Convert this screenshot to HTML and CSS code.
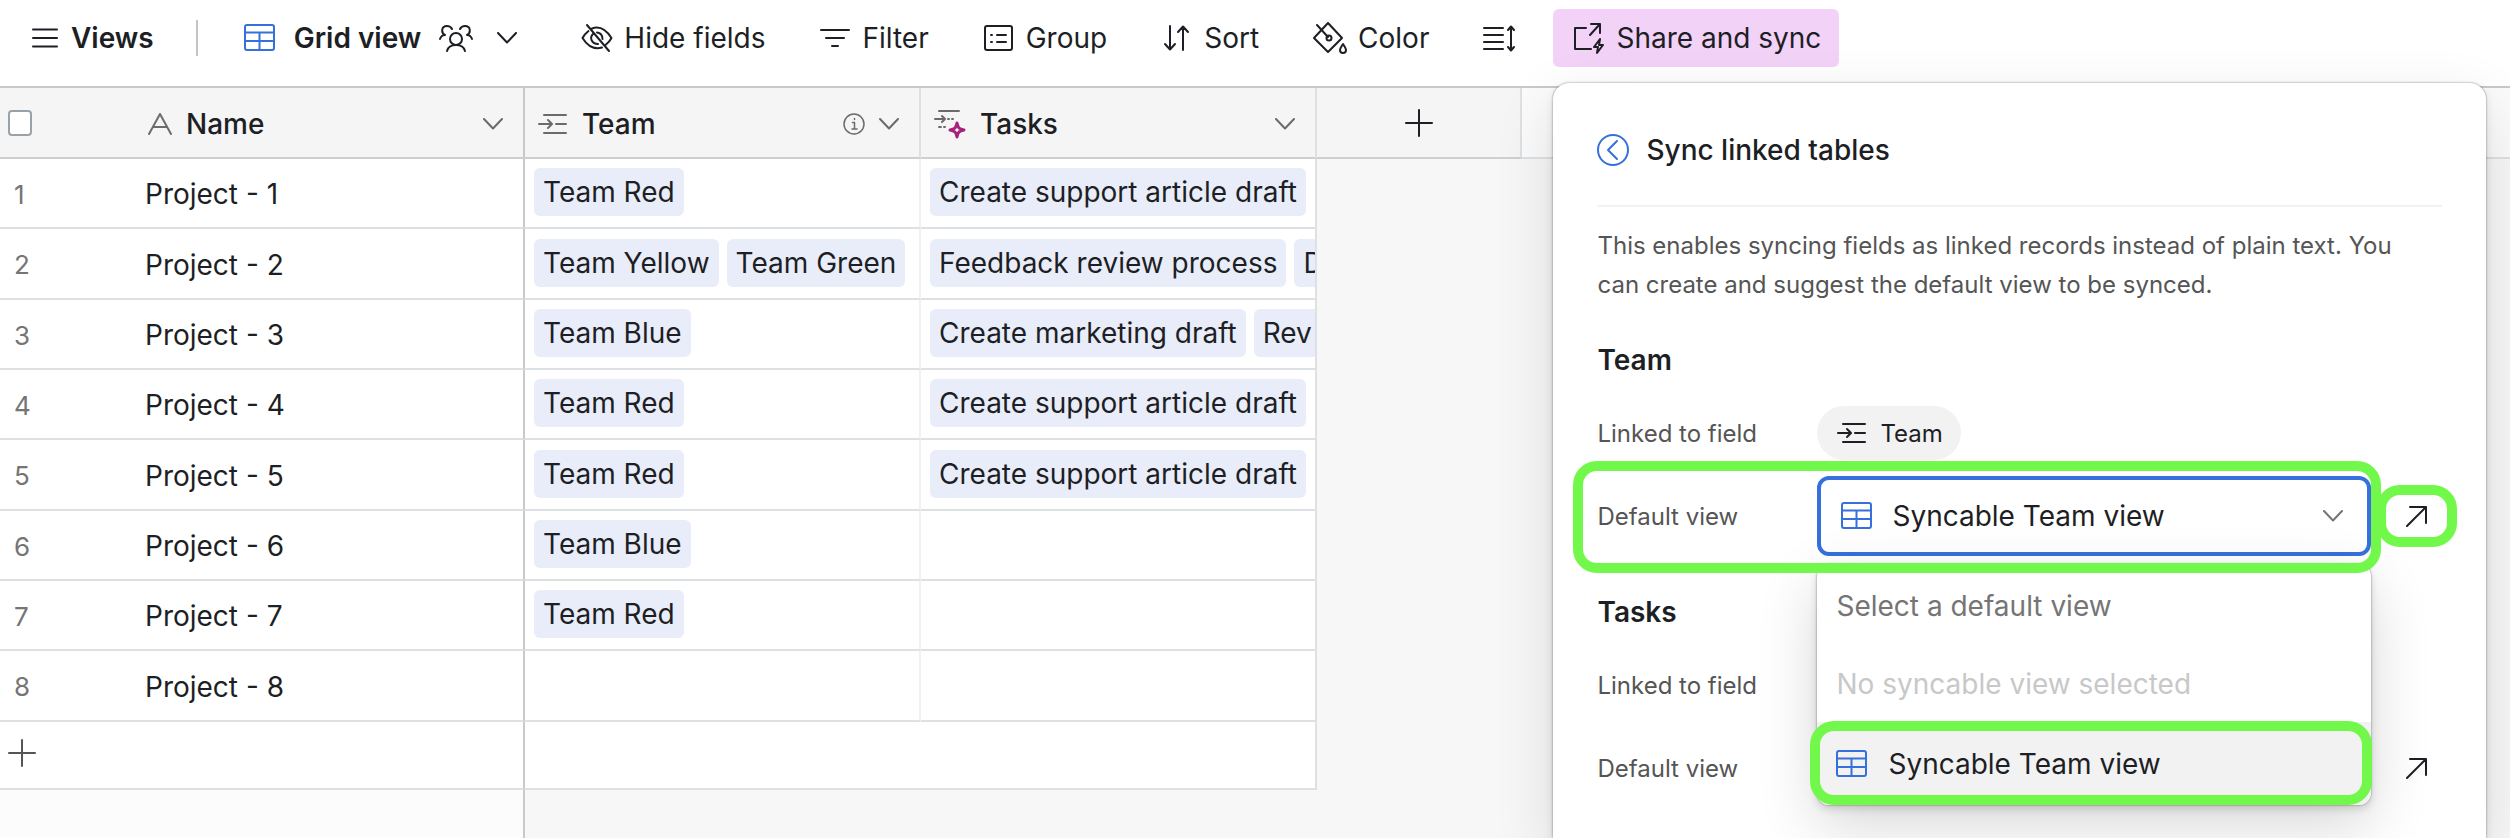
FILE: index.html
```html
<!DOCTYPE html>
<html lang="en">
<head>
  <meta charset="UTF-8" />
  <meta name="viewport" content="width=device-width, initial-scale=1" />
  <title>Grid view</title>
  <link rel="stylesheet" href="styles.css">
</head>
<body>
  <!-- Shared icons -->
  <svg class="sprite" aria-hidden="true">
    <symbol id="i-grid" viewBox="0 0 32 28">
      <rect x="1" y="1" width="29" height="25" rx="2" />
      <path d="M1 8.500h29M1 17h29M15.500 8.500V26" />
    </symbol>
    <symbol id="i-chevron" viewBox="0 0 20 12">
      <path d="M1 1l9 9.500L19 1" />
    </symbol>
    <symbol id="i-link" viewBox="0 0 30 22">
      <path d="M6 2h22M6 20h22M1 11h12M10 7l4 4-4 4M18 11h10" />
    </symbol>
    <symbol id="i-plus" viewBox="0 0 28 28">
      <path d="M14 1v26M1 14h26" />
    </symbol>
    <symbol id="i-open" viewBox="0 0 22 22">
      <path d="M1 21L20 2M4 2h16v16" />
    </symbol>
  </svg>

  <!-- Toolbar -->
  <header class="toolbar">
    <button class="tool views">
      <svg class="icon-views" viewBox="0 0 26 20"><path d="M1 1.500h24M1 10h24M1 18.500h24" /></svg>
      Views
    </button>
    <span class="divider"></span>
    <button class="tool view-name">
      <svg class="icon-grid"><use href="#i-grid" /></svg>
      <span>Grid view</span>
      <svg class="icon-people" viewBox="0 0 34 28">
        <circle cx="17" cy="15" r="6" />
        <path d="M8 27c1-4 4-6 9-6s8 2 9 6M1 15c1-3 3-4 5-4C2 9 2 2 8 2c2 0 4 1 5 3M33 15c-1-3-3-4-5-4 4-2 4-9-2-9-2 0-4 1-5 3" />
      </svg>
      <svg class="icon-chevron"><use href="#i-chevron" /></svg>
    </button>
    <button class="tool">
      <svg class="icon" viewBox="0 0 32 32">
        <path d="M6 3l22 26M11 6.500c8-3 14 1 19.500 9.500-1.500 3-3.500 5-6 7M7.500 9C5 11 3 13 1.500 16c5 8 11 12 19.500 9.500M16 10.500c3.500.5 5.500 3 5.500 6.500M12 12c-4 4-1 10 5 10" />
      </svg>
      Hide fields
    </button>
    <button class="tool">
      <svg class="icon" viewBox="0 0 32 32"><path d="M2 8h28M7 16h18M13 24h6" /></svg>
      Filter
    </button>
    <button class="tool">
      <svg class="icon" viewBox="0 0 32 32">
        <rect x="2" y="4" width="27" height="24" rx="2" />
        <path d="M8 13h1M14 13h9M8 20h1M14 20h9" />
      </svg>
      Group
    </button>
    <button class="tool">
      <svg class="icon" viewBox="0 0 32 32"><path d="M9 4v23M4 22l5 5.500 5-5.500M22 28V5M17 10l5-5.500L27 10" /></svg>
      Sort
    </button>
    <button class="tool">
      <svg class="icon icon-color" viewBox="0 0 34 32">
        <path d="M15 1l14 15-14 14L1 16zM4 3l11 12" />
        <circle cx="16" cy="16" r="2.500" />
        <path d="M30 22c-2 3-3 4.500-3 6a3 3 0 0 0 6 0c0-1.500-1-3-3-6z" />
      </svg>
      Color
    </button>
    <button class="tool" aria-label="Row height">
      <svg class="icon" viewBox="0 0 32 32"><path d="M1 6h19M1 13h19M1 20h19M1 27h19M28 5v23M25 8l3-3.500L31 8M25 25l3 3.500 3-3.500" /></svg>
    </button>

    <div class="share">
      <button class="tool share-button">
        <svg class="icon" viewBox="0 0 32 32">
          <path d="M13 6H2v21h16M17 13L27 2M18 2h9v9M27 17l-6 8h4l-1 6 6-8h-4z" />
        </svg>
        Share and sync
      </button>

      <section class="panel">
        <div class="panel-head">
          <button class="back" aria-label="Back">
            <svg viewBox="0 0 32 32"><circle cx="16" cy="16" r="15" /><path d="M20 7l-9 9 9 9" /></svg>
          </button>
          <h2>Sync linked tables</h2>
        </div>
        <p class="note">This enables syncing fields as linked records instead of plain text. You can create and suggest the default view to be synced.</p>

        <h3>Team</h3>
        <div class="field">
          <span class="label">Linked to field</span>
          <span class="pill"><svg class="icon-link"><use href="#i-link" /></svg>Team</span>
        </div>
        <div class="field default">
          <label class="label" for="team-view">Default view</label>
          <div class="picker">
            <svg class="icon-grid"><use href="#i-grid" /></svg>
            <select id="team-view">
              <option>Syncable Team view</option>
            </select>
            <svg class="icon-chevron"><use href="#i-chevron" /></svg>
            <ul class="menu" role="listbox" aria-label="Select a default view">
              <li class="hint">Select a default view</li>
              <li class="empty">No syncable view selected</li>
              <li class="option" role="option" aria-selected="true">
                <svg class="icon-grid"><use href="#i-grid" /></svg>
                Syncable Team view
                <span class="ring ring-option"></span>
              </li>
            </ul>
          </div>
          <a class="open" href="#" aria-label="Open Team view">
            <svg><use href="#i-open" /></svg>
            <span class="ring ring-open"></span>
          </a>
          <span class="ring ring-field"></span>
        </div>

        <h3>Tasks</h3>
        <div class="field">
          <span class="label">Linked to field</span>
        </div>
        <div class="field default">
          <span class="label">Default view</span>
          <a class="open" href="#" aria-label="Open Tasks view">
            <svg><use href="#i-open" /></svg>
          </a>
        </div>
      </section>
    </div>
  </header>

  <!-- Records -->
  <table class="records">
    <colgroup>
      <col class="col-num"><col class="col-name"><col class="col-link"><col class="col-link"><col class="col-add"><col>
    </colgroup>
    <thead>
      <tr>
        <th><input type="checkbox" aria-label="Select all"></th>
        <th class="name">
          <div class="head">
            <svg class="icon-text" viewBox="0 0 24 22"><path d="M1 21L12 1l11 20M5 14h14" /></svg>
            <span>Name</span>
            <svg class="icon-chevron"><use href="#i-chevron" /></svg>
          </div>
        </th>
        <th class="team">
          <div class="head">
            <svg class="icon-link"><use href="#i-link" /></svg>
            <span>Team</span>
            <svg class="icon-info" viewBox="0 0 22 22"><circle cx="11" cy="11" r="10" /><path d="M9.500 9.500h2V16M9 16h5M11.500 5.500v1" /></svg>
            <svg class="icon-chevron"><use href="#i-chevron" /></svg>
          </div>
        </th>
        <th class="tasks">
          <div class="head">
            <svg class="icon-ai" viewBox="0 0 32 30">
              <path d="M5 2h20M1 10h9M8 7l3 3-3 3M14 10h1M18 10h1M5 18h2M10 18h1" />
              <path class="spark" d="M23 14c1 5 2 6 7 7-5 1-6 2-7 7-1-5-2-6-7-7 5-1 6-2 7-7z" />
            </svg>
            <span>Tasks</span>
            <svg class="icon-chevron"><use href="#i-chevron" /></svg>
          </div>
        </th>
        <th class="add"><button aria-label="Add field"><svg class="icon-plus"><use href="#i-plus" /></svg></button></th>
        <th class="rest"></th>
      </tr>
    </thead>
    <tbody>
      <tr>
        <td class="num">1</td><td class="name">Project - 1</td>
        <td class="team"><div class="chips"><span>Team Red</span></div></td>
        <td class="tasks"><div class="chips"><span>Create support article draft</span></div></td>
      </tr>
      <tr>
        <td class="num">2</td><td class="name">Project - 2</td>
        <td class="team"><div class="chips"><span>Team Yellow</span><span>Team Green</span></div></td>
        <td class="tasks"><div class="chips"><span>Feedback review process</span><span>D</span></div></td>
      </tr>
      <tr>
        <td class="num">3</td><td class="name">Project - 3</td>
        <td class="team"><div class="chips"><span>Team Blue</span></div></td>
        <td class="tasks"><div class="chips"><span>Create marketing draft</span><span>Rev</span></div></td>
      </tr>
      <tr>
        <td class="num">4</td><td class="name">Project - 4</td>
        <td class="team"><div class="chips"><span>Team Red</span></div></td>
        <td class="tasks"><div class="chips"><span>Create support article draft</span></div></td>
      </tr>
      <tr>
        <td class="num">5</td><td class="name">Project - 5</td>
        <td class="team"><div class="chips"><span>Team Red</span></div></td>
        <td class="tasks"><div class="chips"><span>Create support article draft</span></div></td>
      </tr>
      <tr>
        <td class="num">6</td><td class="name">Project - 6</td>
        <td class="team"><div class="chips"><span>Team Blue</span></div></td>
        <td class="tasks"></td>
      </tr>
      <tr>
        <td class="num">7</td><td class="name">Project - 7</td>
        <td class="team"><div class="chips"><span>Team Red</span></div></td>
        <td class="tasks"></td>
      </tr>
      <tr>
        <td class="num">8</td><td class="name">Project - 8</td>
        <td class="team"></td>
        <td class="tasks"></td>
      </tr>
    </tbody>
    <tfoot>
      <tr>
        <td class="num"><button aria-label="Add record"><svg class="icon-plus"><use href="#i-plus" /></svg></button></td>
        <td class="name"></td>
        <td class="tasks" colspan="2"></td>
      </tr>
    </tfoot>
  </table>
  <div class="frozen-rest"></div>
</body>
</html>
```
FILE: styles.css
```css
* {
  box-sizing: border-box;
}

body {
  margin: 0;
  height: 100vh;
  overflow: hidden;
  display: flex;
  flex-direction: column;
  background: #f7f7f7;
  color: #1d1f25;
  font-family: Inter, "Liberation Sans", sans-serif;
  font-size: 28px;
}

button {
  border: none;
  background: none;
  padding: 0;
  color: inherit;
  font: inherit;
  cursor: pointer;
}

svg {
  display: block;
  flex: none;
  fill: none;
  stroke: currentColor;
  stroke-width: 2;
  stroke-linecap: round;
  stroke-linejoin: round;
}

.sprite {
  position: absolute;
  width: 0;
  height: 0;
}

.icon {
  width: 32px;
  height: 32px;
}

.icon-color {
  width: 34px;
}

.icon-views {
  width: 26px;
  height: 20px;
}

.icon-grid {
  width: 32px;
  height: 28px;
  color: #3570dc;
}

.icon-people {
  width: 34px;
  height: 28px;
}

.icon-chevron {
  width: 20px;
  height: 12px;
}

.icon-link {
  width: 30px;
  height: 22px;
}

.icon-text {
  width: 24px;
  height: 22px;
}

.icon-info {
  width: 22px;
  height: 22px;
  stroke-width: 1.5;
}

.icon-ai {
  width: 32px;
  height: 30px;
}

.icon-ai .spark {
  stroke: #a8207f;
  stroke-width: 3;
}

.icon-plus {
  width: 28px;
  height: 28px;
}

/* Toolbar */
.toolbar {
  flex: none;
  height: 88px;
  display: flex;
  align-items: flex-start;
  padding: 9px 24px 0 32px;
  background: #fff;
  border-bottom: 2px solid #c9c9c9;
}

.tool {
  height: 58px;
  display: flex;
  align-items: center;
  gap: 11px;
  margin-right: 54px;
  white-space: nowrap;
}

.views {
  gap: 13px;
  margin-right: 42px;
  font-weight: 600;
}

.divider {
  width: 2px;
  height: 36px;
  margin: 11px 46px 0 0;
  background: #c4c4c4;
}

.view-name {
  gap: 18px;
  margin-right: 64px;
  font-weight: 600;
}

.view-name .icon-chevron {
  margin-left: 6px;
}

.share {
  position: relative;
  margin-left: -16px;
}

.share-button {
  margin: 0;
  padding: 0 18px 0 20px;
  border-radius: 6px;
  background: #f3d2f8;
}

/* Share and sync popover */
.panel {
  position: absolute;
  z-index: 2;
  top: 74px;
  left: 0;
  width: 933px;
  height: calc(100vh - 83px);
  padding: 0 44px;
  border-radius: 16px 16px 0 0;
  background: #fff;
  box-shadow: 0 0 2px rgba(0, 0, 0, 0.5), 0 4px 8px rgba(0, 0, 0, 0.12), 0 20px 60px rgba(0, 0, 0, 0.12);
}

.panel-head {
  height: 124px;
  display: flex;
  align-items: center;
  gap: 17px;
  padding-top: 11px;
  border-bottom: 2px solid #f2f2f2;
}

.back svg {
  width: 32px;
  height: 32px;
  color: #3570dc;
}

h2,
h3 {
  margin: 0;
  font-size: 28px;
  font-weight: 500;
}

h3 {
  height: 40px;
  margin: 36px 0 26px;
  line-height: 40px;
  font-weight: 600;
}

.note {
  margin: 19px 0 0;
  padding-right: 24px;
  color: #555;
  font-size: 24px;
  line-height: 39px;
}

.field {
  position: relative;
  height: 54px;
  display: grid;
  grid-template-columns: 220px 1fr 71px;
  align-items: center;
}

.field.default {
  height: 80px;
  margin-top: 16px;
}

.label {
  color: #555;
  font-size: 24px;
}

.pill {
  justify-self: start;
  height: 54px;
  display: flex;
  align-items: center;
  gap: 13px;
  padding: 0 18px 0 20px;
  border-radius: 27px;
  background: #f2f2f2;
  font-size: 24px;
}

.picker {
  position: relative;
}

.picker select {
  display: block;
  width: 100%;
  height: 80px;
  padding: 0 60px 0 71px;
  border: 4px solid #3570dc;
  border-radius: 12px;
  background: #fff;
  appearance: none;
  color: inherit;
  font: inherit;
}

.picker > .icon-grid,
.picker > .icon-chevron {
  position: absolute;
  top: 26px;
  left: 24px;
  pointer-events: none;
}

.picker > .icon-chevron {
  top: 34px;
  right: 28px;
  left: auto;
  color: #757575;
}

.menu {
  position: absolute;
  z-index: 1;
  top: 88px;
  left: 0;
  width: 100%;
  margin: 0;
  padding: 0;
  list-style: none;
  border-radius: 12px;
  background: #fff;
  box-shadow: 0 0 2px rgba(0, 0, 0, 0.5), 0 4px 8px rgba(0, 0, 0, 0.14), 0 20px 60px rgba(0, 0, 0, 0.16);
}

.menu li {
  height: 79px;
  display: flex;
  align-items: center;
  padding: 0 19px;
}

.menu .hint {
  color: #757575;
  padding-top: 4px;
}

.menu .empty {
  color: #c8c8c8;
  padding-top: 2px;
}

.menu .option {
  position: relative;
  height: 83px;
  gap: 20px;
  border-radius: 0 0 12px 12px;
  background: #f2f2f2;
}

.open {
  grid-column: 3;
  position: relative;
  height: 32px;
  margin-left: 20px;
  display: flex;
  align-items: center;
  justify-content: center;
  color: inherit;
}

.open svg {
  width: 22px;
  height: 22px;
}

/* Callout outlines */
.ring {
  position: absolute;
  z-index: 2;
  border: 10px solid #72f84b;
  border-radius: 24px;
  pointer-events: none;
}

.ring-field {
  inset: -15px 61px -17px -24px;
}

.ring-open {
  inset: -15px;
}

.ring-option {
  inset: -1px -1px 0 -7px;
}

/* Records table */
.records {
  flex: none;
  width: 100%;
  table-layout: fixed;
  border-collapse: separate;
  border-spacing: 0;
}

.col-num {
  width: 145px;
}

.col-name {
  width: 380px;
}

.col-link {
  width: 396px;
}

.col-add {
  width: 205px;
}

th,
td {
  height: 70px;
  padding: 0;
  text-align: left;
}

tbody tr:nth-child(3n + 2) td {
  height: 71px;
}

th {
  height: 71px;
  background: #f5f5f5;
  border-bottom: 2px solid #cfcfcf;
  font-weight: 500;
}

th.rest {
  background: #fbfbfb;
  border-bottom-color: #dde1e4;
}

th.team,
th.tasks,
th.add {
  border-right: 2px solid #dde1e4;
}

th.add button {
  display: block;
  margin: 0 auto;
}

td {
  background: #fff;
  border-bottom: 2px solid #dde1e4;
}

.name {
  border-right: 2px solid #c9c9c9;
}

td.team {
  border-right: 2px solid #f1f1f1;
}

td.tasks {
  border-right: 2px solid #dde1e4;
}

.head {
  display: flex;
  align-items: center;
  gap: 14px;
  padding: 2px 20px 0 13px;
}

.name .head {
  padding-left: 3px;
}

.head svg {
  color: #6b6b6b;
}

.head span {
  flex: 1;
}

input[type="checkbox"] {
  display: block;
  width: 24px;
  height: 26px;
  margin: 0 0 0 8px;
  border: 2px solid #98a2a8;
  border-radius: 4px;
  background: #fff;
  appearance: none;
}

td.name {
  padding-top: 2px;
}

.num {
  padding: 2px 0 0 14px;
  color: #757575;
  font-size: 26px;
}

tfoot td {
  height: 68px;
}

tfoot .num {
  padding-left: 8px;
  color: #555;
}

/* Empty area below the frozen columns */
.frozen-rest {
  flex: 1;
  width: 525px;
  background: #fcfcfc;
  border-right: 2px solid #c9c9c9;
}

.chips {
  display: flex;
  gap: 8px;
  padding: 0 0 2px 9px;
  overflow: hidden;
}

.chips span {
  flex: none;
  max-width: 376px;
  height: 48px;
  padding: 0 9px;
  border-radius: 6px;
  background: #e9edf9;
  line-height: 48px;
  white-space: nowrap;
}
```
